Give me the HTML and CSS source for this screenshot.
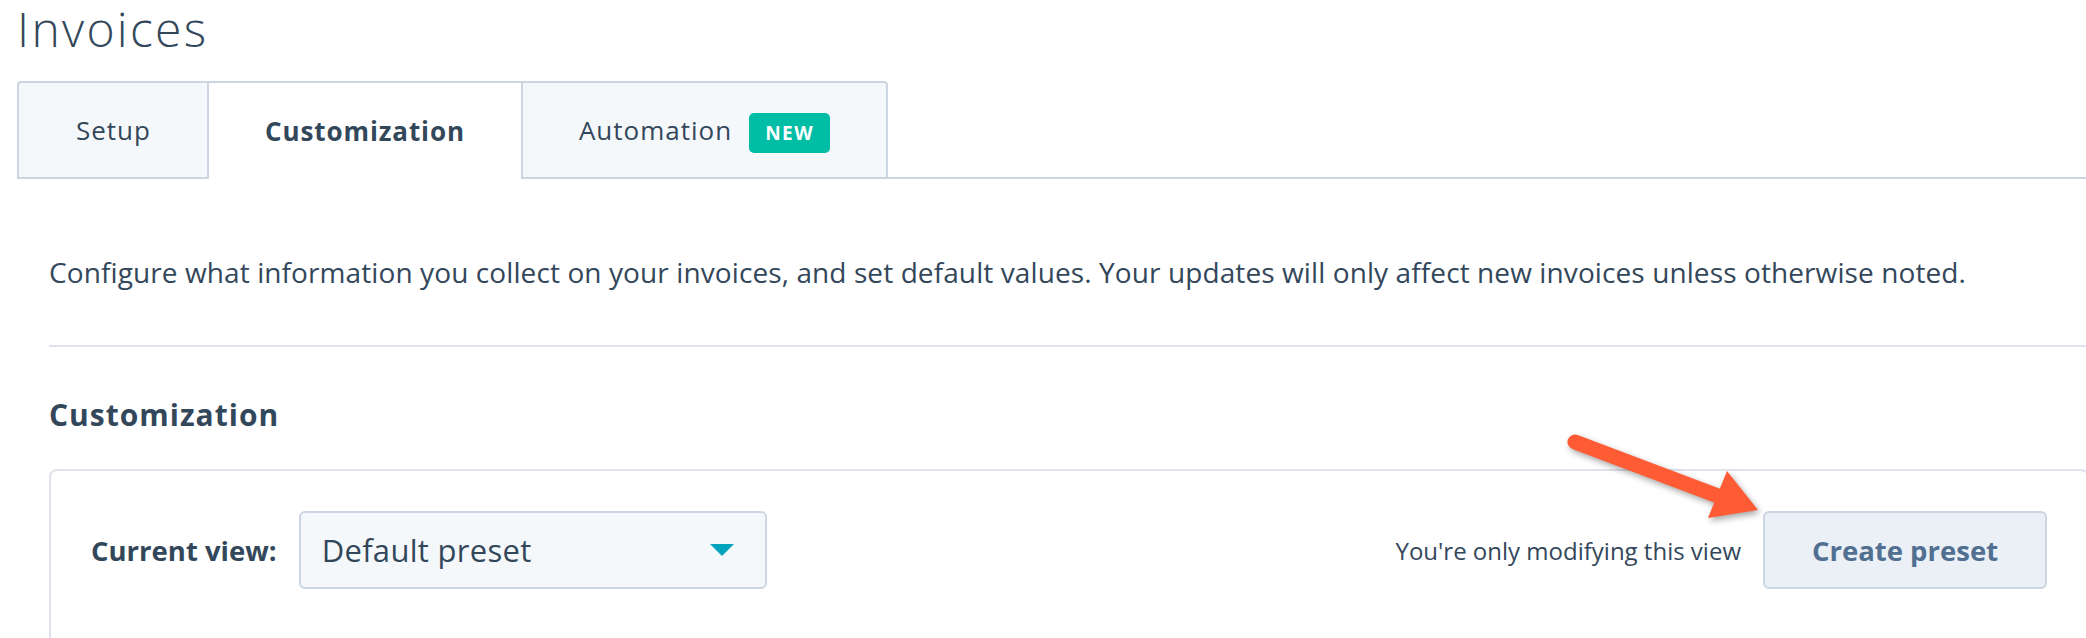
FILE: index.html
```html
<!DOCTYPE html>
<html lang="en">
<head>
<meta charset="utf-8">
<title>Invoices</title>
<link rel="stylesheet" href="styles.css">
</head>
<body>
<div class="page">
  <h1 class="title">Invoices</h1>
  <nav class="tabs">
    <div class="tab">Setup</div>
    <div class="tab tab-active">Customization</div>
    <div class="tab tab-last">Automation <span class="badge">NEW</span></div>
  </nav>
  <section class="panel">
    <p class="desc">Configure what information you collect on your invoices, and set default values. Your updates will only affect new invoices unless otherwise noted.</p>
    <hr class="divider">
    <h2 class="section-title">Customization</h2>
    <div class="card">
      <div class="toolbar">
        <div class="view">
          <span class="view-label">Current view:</span>
          <div class="select">
            <span class="select-value">Default preset</span>
            <svg class="caret" width="24" height="12" viewBox="0 0 24 12"><path d="M0 0H24L12 12Z" fill="#00a4bd"/></svg>
          </div>
        </div>
        <div class="actions">
          <span class="note">You're only modifying this view</span>
          <button class="btn">Create preset</button>
        </div>
      </div>
    </div>
  </section>
</div>
<svg class="arrow" width="240" height="120" viewBox="0 0 240 120">
  <g class="arrow-shape">
    <line x1="25" y1="22" x2="176" y2="79" stroke="#ff5c35" stroke-width="15" stroke-linecap="round"/>
    <path d="M177 51 L208 90 L158 98 Z" fill="#ff5c35"/>
  </g>
</svg>
</body>
</html>
```

FILE: styles.css
```css
* { box-sizing: border-box; }
html, body { margin: 0; padding: 0; background: #fff; }
body {
  overflow: hidden;
  font-family: "Open Sans", "Noto Sans", sans-serif;
  color: #33475b;
  position: relative;
  width: 2086px;
  height: 638px;
}
.page {
  margin-left: 17px;
  width: 2104px;
}
.title {
  margin: 0;
  font-size: 48px;
  line-height: 58px;
  font-weight: 300;
  letter-spacing: 2.3px;
  color: #33475b;
}
.tabs {
  margin-top: 23px;
  display: flex;
  border-bottom: 2px solid #cbd6e2;
  height: 98px;
}
.tab {
  display: flex;
  align-items: center;
  gap: 17px;
  padding: 0 56px;
  background: #f5f8fa;
  border-top: 2px solid #cbd6e2;
  border-left: 2px solid #cbd6e2;
  font-size: 26px;
  letter-spacing: 1px;
  color: #33475b;
}
.tab:first-child { border-top-left-radius: 4px; padding-left: 57px; }
.tab-last { border-right: 2px solid #cbd6e2; border-top-right-radius: 4px; }
.tab-active {
  background: #fff;
  font-weight: 700;
  letter-spacing: 0.9px;
  height: 98px;
  margin-bottom: -2px;
}
.badge {
  display: inline-flex;
  align-items: center;
  height: 40px;
  padding: 0 16px;
  border-radius: 5px;
  background: #00bda5;
  color: #fff;
  font-size: 19px;
  font-weight: 700;
  letter-spacing: 1.5px;
  margin-top: 6px;
}
.panel {
  padding: 0 32px;
}
.desc {
  margin: 75px 0 0;
  font-size: 28px;
  line-height: 36px;
  letter-spacing: 0.1px;
}
.divider {
  margin: 55px 0 0;
  border: 0;
  height: 2px;
  background: #dfe3eb;
}
.section-title {
  margin: 50px 0 0;
  font-size: 30px;
  line-height: 36px;
  font-weight: 700;
  letter-spacing: 1px;
}
.card {
  margin-top: 36px;
  border: 2px solid #dfe3eb;
  border-radius: 8px;
  padding: 40px 40px 80px;
}
.toolbar {
  display: flex;
  align-items: center;
  justify-content: space-between;
}
.view {
  display: flex;
  align-items: center;
  gap: 22px;
}
.view-label {
  font-size: 27.5px;
  font-weight: 700;
}
.select {
  width: 468px;
  height: 78px;
  display: flex;
  align-items: center;
  justify-content: space-between;
  padding: 0 31px 0 21px;
  background: #f5f8fa;
  border: 2px solid #cbd6e2;
  border-radius: 6px;
}
.select-value {
  font-size: 31px;
  letter-spacing: 0.3px;
}
.caret { display: block; }
.actions {
  display: flex;
  align-items: center;
  gap: 22px;
}
.note {
  font-size: 24px;
}
.btn {
  height: 78px;
  width: 284px;
  background: #eaf0f6;
  border: 2px solid #cbd6e2;
  border-radius: 6px;
  font-family: inherit;
  font-size: 27.5px;
  font-weight: 700;
  color: #516f90;
  padding: 0;
}
.arrow {
  position: absolute;
  left: 1550px;
  top: 420px;
  overflow: visible;
}
.arrow-shape {
  filter: drop-shadow(2px 3px 3px rgba(0, 0, 0, 0.35));
}
```
